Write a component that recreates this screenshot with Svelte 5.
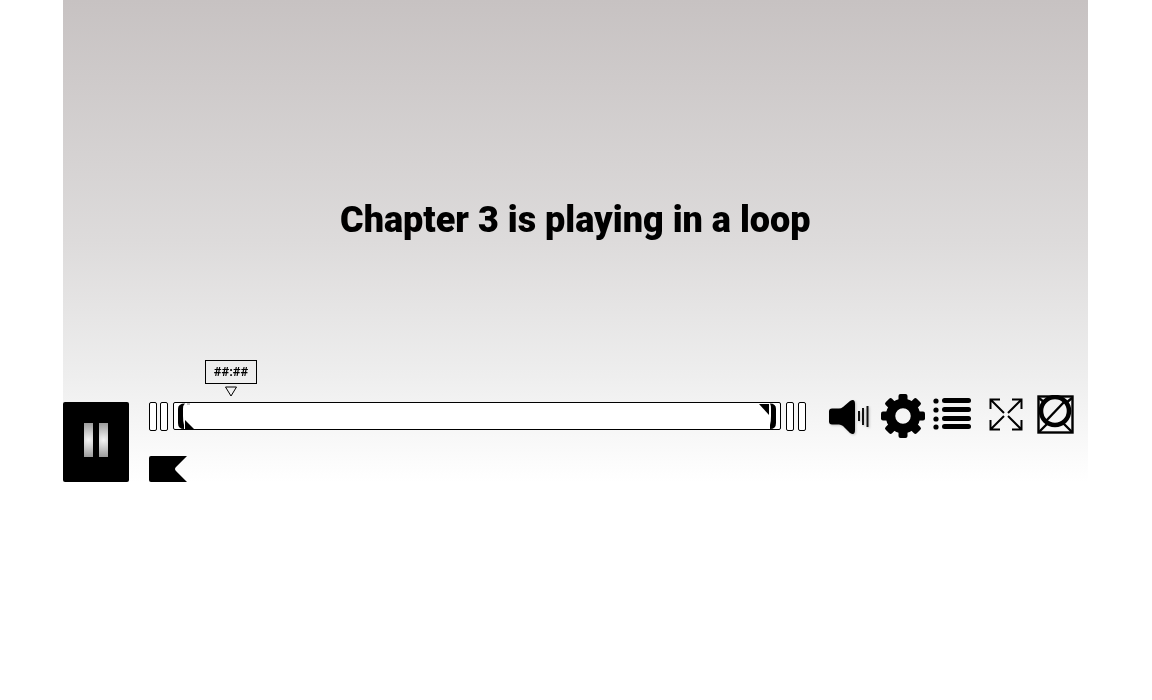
<script>
  const teeth = [0, 45, 90, 135, 180, 225, 270, 315]
</script>

<div class="player">
  <div class="stage">
    <h1>Chapter 3 is playing in a loop</h1>
  </div>

  <div class="controls">
    <button class="pause" aria-label="Pause">
      <span class="bar"></span>
      <span class="bar"></span>
    </button>

    <div class="timeline">
      <div class="track">
        <span class="tick"></span>
        <span class="tick"></span>
        <div class="range">
          <svg class="grip left" width="22" height="28" viewBox="0 0 22 28">
            <path d="M11 1.5 Q4 1.5 4 7 V21 Q4 27 10 27 L10 23 Q9 20 9 14 V7 Q9 3 11 1.5 Z" fill="#000" />
            <path d="M11 18 L21 28 H11 Z" fill="#000" />
            <path d="M13 2 H16" stroke="#888" stroke-width="1" />
          </svg>
          <svg class="grip right" width="22" height="28" viewBox="0 0 22 28">
            <path d="M12 1.5 Q18 1.5 18 7 V21 Q18 27 12 27 L12 23 Q13 20 13 14 V7 Q13 3 12 1.5 Z" fill="#000" />
            <path d="M1 2 H11 V13 Z" fill="#000" />
          </svg>
        </div>
        <span class="tick first"></span>
        <span class="tick last"></span>

        <div class="tooltip">
          <span class="time">##:##</span>
          <svg width="12" height="11" viewBox="0 0 12 11">
            <path d="M0.5 1 H11.5 L6 10 Z" fill="none" stroke="#000" />
          </svg>
        </div>
      </div>
      <svg class="flag" width="38" height="26" viewBox="0 0 38 26">
        <path d="M2 0 H38 L27 11 Q25 13 27 15 L38 26 H2 Q0 26 0 24 V2 Q0 0 2 0 Z" fill="#000" />
      </svg>
    </div>

    <div class="icons">
      <svg class="volume" width="41" height="34" viewBox="0 0 41 34">
        <path d="M3 8.5 H10 Q12 8.5 14 7 L21 1 Q26 -2 26 4 V30 Q26 36 21 33 L14 26 Q12 24.5 10 24.5 H3 Q0 24.5 0 21.5 V11.5 Q0 8.5 3 8.5 Z" fill="#000" />
        <path d="M30 11 V21 M34 8 V25 M38.5 6 V27" stroke="#111" stroke-width="2" />
      </svg>

      <svg class="gear" width="44" height="44" viewBox="0 0 44 44">
        {#each teeth as angle}
          <rect x="17.5" y="0" width="9" height="10" rx="2" fill="#000" transform="rotate({angle} 22 22)" />
        {/each}
        <circle cx="22" cy="22" r="12.5" fill="none" stroke="#000" stroke-width="9.5" />
      </svg>

      <svg class="list" width="38" height="32" viewBox="0 0 38 32">
        <g fill="#000">
          <circle cx="3" cy="3" r="2.6" />
          <circle cx="3" cy="12" r="2.6" />
          <circle cx="3" cy="21" r="2.6" />
          <circle cx="3" cy="29" r="2.6" />
          <rect x="9" y="0" width="29" height="5" rx="2.5" />
          <rect x="9" y="9" width="29" height="5" rx="2.5" />
          <rect x="9" y="18" width="29" height="5" rx="2.5" />
          <rect x="9" y="26" width="29" height="5" rx="2.5" />
        </g>
      </svg>

      <svg class="expand" width="34" height="33" viewBox="0 0 34 33">
        <path
          d="M11 1.5 H1.5 V11 M23 1.5 H32.5 V11 M11 31.5 H1.5 V22 M23 31.5 H32.5 V22 M2 2 L15 15 M32 2 L19 15 M2 31 L15 18 M32 31 L19 18"
          fill="none"
          stroke="#000"
          stroke-width="2"
        />
      </svg>

      <svg class="captions" width="37" height="39" viewBox="0 0 37 39">
        <rect x="1.5" y="1.5" width="34" height="36" fill="none" stroke="#000" stroke-width="2.4" />
        <path d="M2 37 L11 28 M35 37 L26 28 M2 3 L8 8 M35 3 L29 8" stroke="#000" stroke-width="2.4" />
        <circle cx="18" cy="16" r="14" fill="none" stroke="#000" stroke-width="4.5" />
        <path d="M9 26 L28 6" stroke="#000" stroke-width="2.4" />
      </svg>
    </div>
  </div>
</div>

<style>
  :global(body) {
    background: #fff;
    font-family: Roboto, sans-serif;
  }

  .player {
    width: 1025px;
    height: 482px;
    margin-left: 63px;
    display: flex;
    flex-direction: column;
    background: linear-gradient(#c7c2c2, #dddbdb 50%, #eeeeee 78%, #ffffff);
  }

  .stage {
    flex: 1;
    display: flex;
    align-items: center;
    justify-content: center;
    padding-top: 38px;
  }

  h1 {
    margin: 0;
    font-size: 36px;
    font-weight: 900;
    color: #000;
    will-change: transform;
  }

  .controls {
    height: 80px;
    display: flex;
    align-items: flex-start;
  }

  .pause {
    width: 66px;
    height: 80px;
    padding: 0 0 4px;
    border: 0;
    border-radius: 2px;
    background: #000;
    display: flex;
    align-items: center;
    justify-content: center;
    gap: 6px;
  }

  .bar {
    width: 9px;
    height: 34px;
    background: radial-gradient(circle, #f4f4f4, #999);
  }

  .timeline {
    margin-left: 20px;
    width: 657px;
    display: flex;
    flex-direction: column;
    align-items: flex-start;
    gap: 26px;
  }

  .track {
    position: relative;
    width: 100%;
    height: 28px;
    display: flex;
    gap: 3px;
  }

  .tick {
    width: 6px;
    height: 27px;
    background: #fff;
    border: 1px solid #000;
    border-radius: 2px;
  }

  .tick.first {
    margin-left: 2px;
  }

  .tick.last {
    margin-left: 1px;
  }

  .range {
    position: relative;
    width: 606px;
    height: 26px;
    margin-left: 2px;
    background: #fff;
    border: 1px solid #000;
    border-radius: 2px;
  }

  .grip {
    position: absolute;
    top: -1px;
  }

  .grip.left {
    left: 0;
  }

  .grip.right {
    right: 0;
  }

  .tooltip {
    position: absolute;
    left: 56px;
    top: -42px;
    display: flex;
    flex-direction: column;
    align-items: center;
    gap: 2px;
    will-change: transform;
  }

  .time {
    width: 50px;
    height: 22px;
    border: 1px solid #000;
    font-size: 13px;
    font-weight: 700;
    line-height: 22px;
    text-align: center;
    color: #000;
  }

  .flag {
    display: block;
  }

  .icons {
    margin-left: 23px;
    display: flex;
    align-items: flex-start;
    gap: 11px;
  }

  .volume {
    margin-top: -2px;
    filter: drop-shadow(1px 1px 1px rgba(0, 0, 0, 0.2));
  }

  .gear {
    margin-top: -8px;
  }

  .list {
    margin-left: -3px;
    margin-top: -4px;
  }

  .expand {
    margin-left: 7px;
    margin-top: -4px;
  }

  .captions {
    margin-left: 3px;
    margin-top: -7px;
  }
</style>
